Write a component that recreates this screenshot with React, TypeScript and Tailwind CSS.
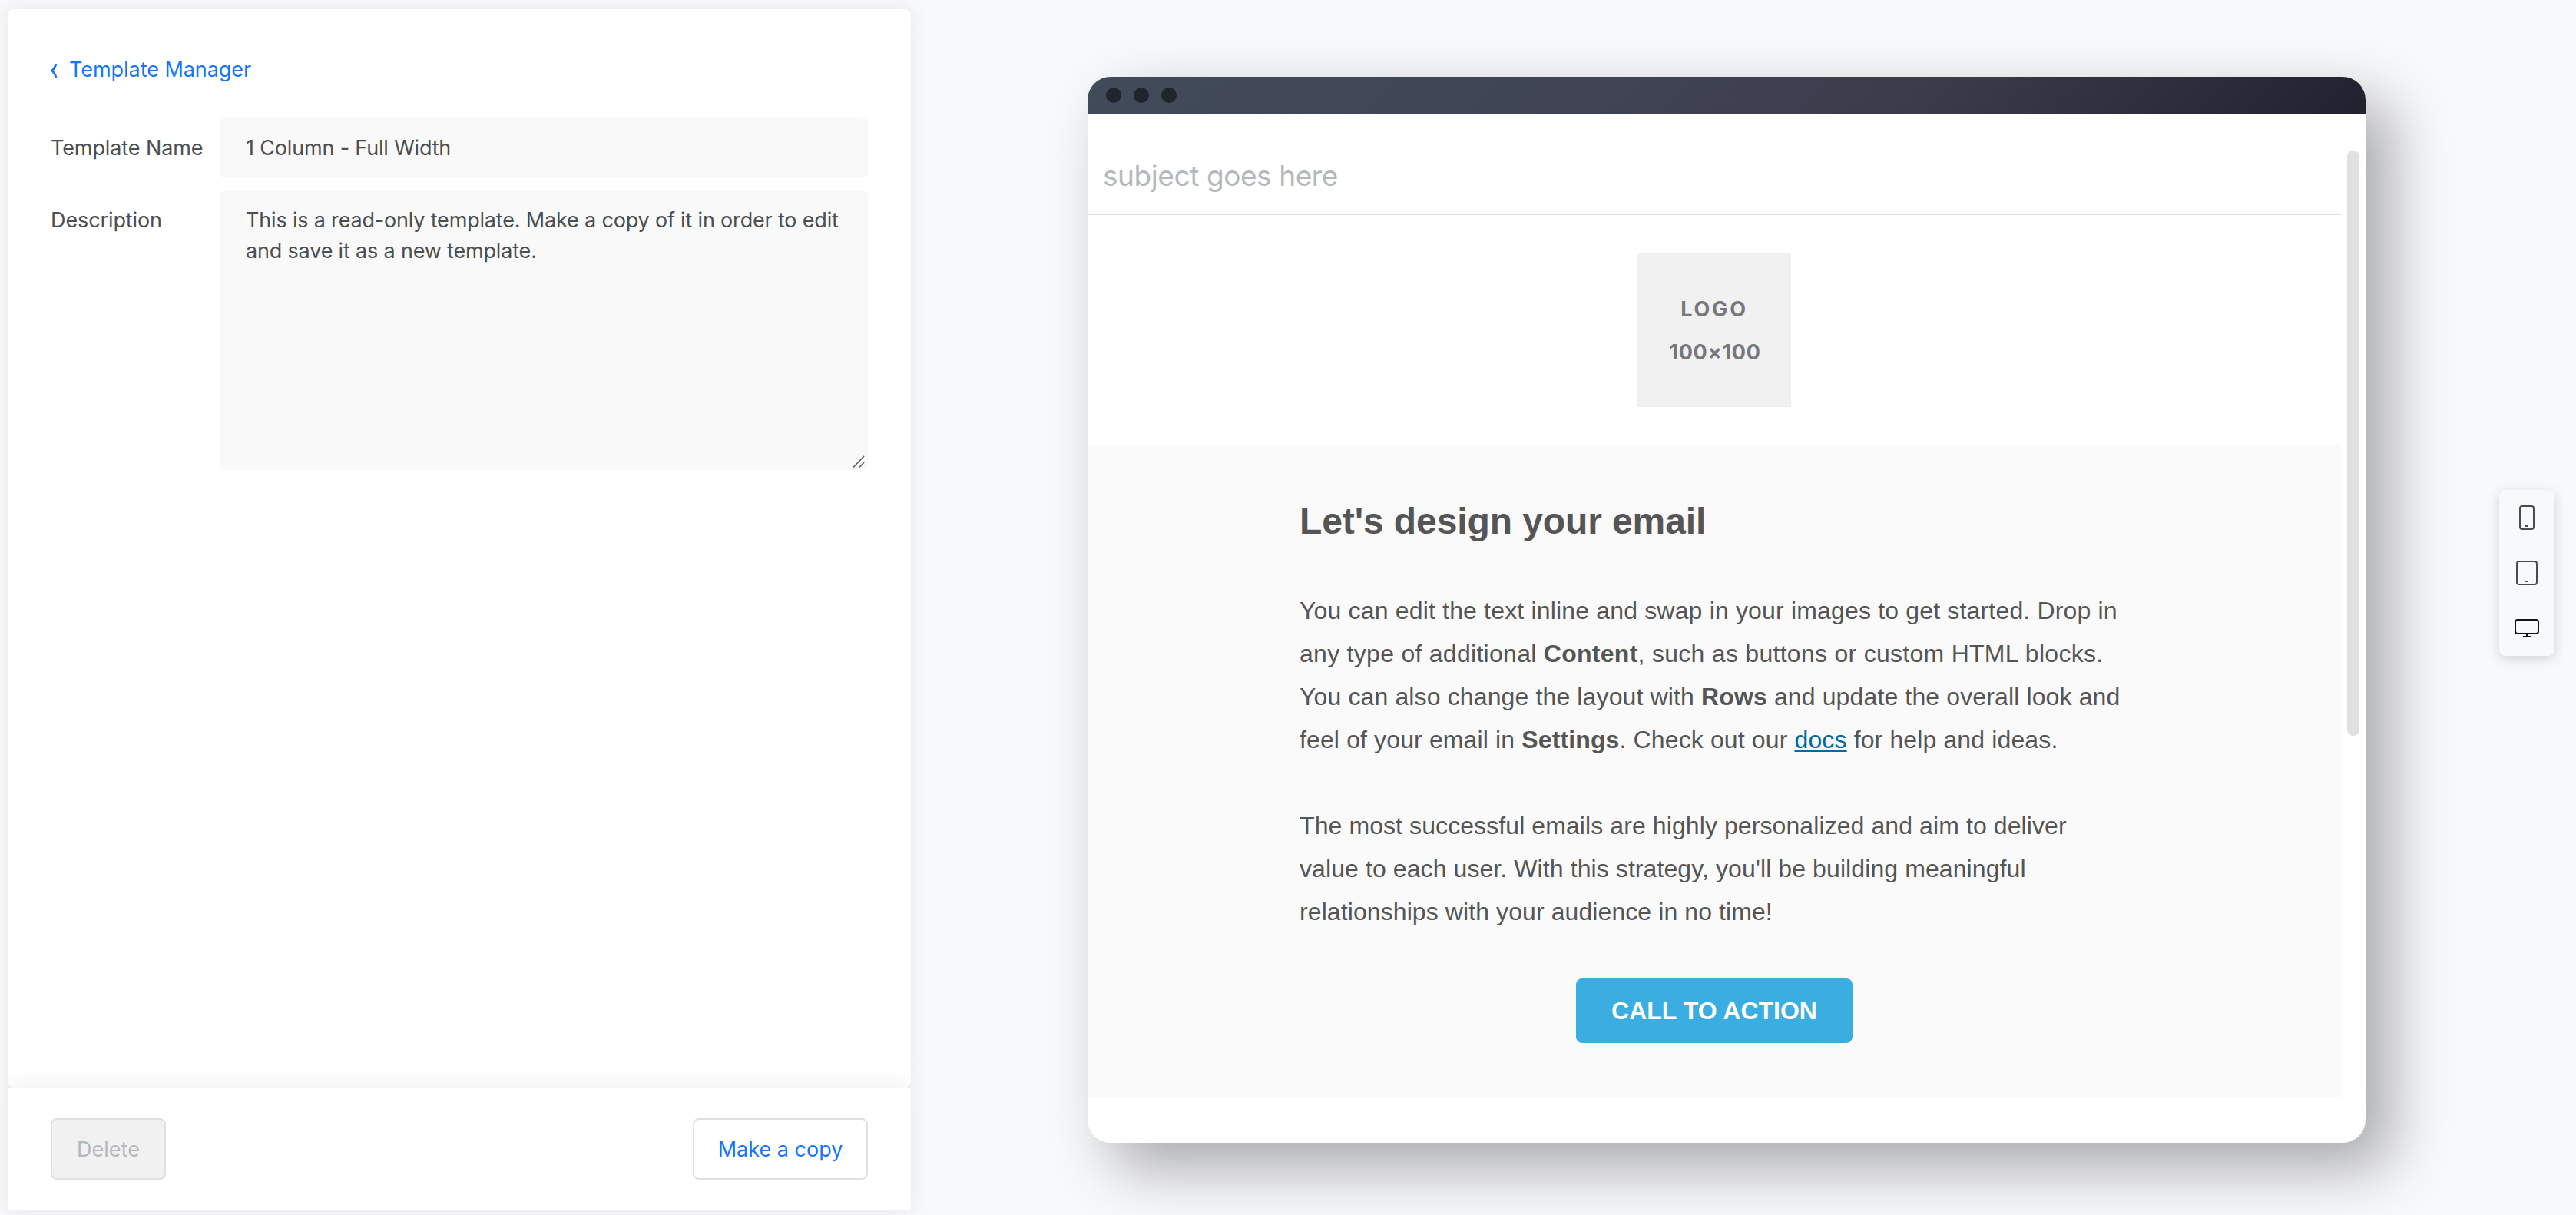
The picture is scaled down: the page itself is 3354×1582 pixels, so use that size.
import type { ReactNode } from 'react';
import clsx from 'clsx';

// --- Form ---
function Field({ label, labelClass, children }: { label: string; labelClass: string; children: ReactNode }) {
  return (
    <div className="flex">
      <label className={clsx('w-[220px] shrink-0 whitespace-nowrap leading-10 tracking-[-0.1px]', labelClass)}>{label}</label>
      {children}
    </div>
  );
}

function ResizeGrip() {
  return (
    <svg className="absolute right-1 bottom-[3px] h-4 w-4" viewBox="0 0 16 16" stroke="#5c5c5c" strokeWidth="1.6">
      <path d="M1 15.5 15 1M9 15.5 15 9" />
    </svg>
  );
}

function TemplatePanel() {
  return (
    <aside className="flex w-[1176px] shrink-0 flex-col font-['Inter','Liberation_Sans',sans-serif] text-[27px] text-[#4b4f4f]">
      <div className="flex-1 rounded-lg bg-white px-14 pt-[59px] shadow-[0_0_28px_rgba(0,0,0,0.08)]">
        <a className="flex h-10 items-center text-[#1476ff]">
          <svg className="mt-0.5 mr-[15px] h-[18px] w-[9px]" viewBox="0 0 9 18" fill="none" stroke="currentColor" strokeWidth="2.8">
            <path d="M7 0C6 4.500 4 7 1.800 9C4 11 6 13.500 7 18" />
          </svg>
          <span className="tracking-[-0.05px]">Template Manager</span>
        </a>
        <div className="mt-[41px] flex flex-col gap-4">
          <Field label="Template Name" labelClass="pt-[21px]">
            <div className="h-20 min-w-0 flex-1 rounded-lg bg-[#f9f9f9] px-[34px] pt-[21px] leading-10 tracking-[-0.17px]">
              1 Column - Full Width
            </div>
          </Field>
          <Field label="Description" labelClass="pt-[19px]">
            <div className="relative h-[364px] min-w-0 flex-1 rounded-lg bg-[#f9f9f9] px-[34px] pt-[19px] leading-10 tracking-[-0.18px] whitespace-nowrap">
              This is a read-only template. Make a copy of it in order to edit
              <br />
              and save it as a new template.
              <ResizeGrip />
            </div>
          </Field>
        </div>
      </div>
      <div className="relative flex h-40 items-center justify-between bg-white px-14 shadow-[0_0_28px_rgba(0,0,0,0.08)]">
        <button className="h-20 w-[150px] rounded-lg border-2 border-[#e0e0e0] bg-[#f1f1f1] pt-0.5 text-[#b2b9bb]">Delete</button>
        <button className="h-20 w-[228px] rounded-lg border-2 border-[#e0e0e0] bg-white pt-0.5 text-[#1476ff]">
          Make a copy
        </button>
      </div>
    </aside>
  );
}

// --- Email preview ---
function EmailBody() {
  return (
    <div className="h-[848px] bg-[#fafafa] pl-[276px] font-['Liberation_Sans',Arial,sans-serif] text-[32px] leading-[56px] text-[#555555]">
      <h1 className="pt-[70px] text-[48px] leading-[58px] font-bold tracking-[-0.1px] whitespace-nowrap">Let's design your email</h1>
      <p className="pt-[59px] tracking-[0.13px] whitespace-nowrap">
        <span className="tracking-[0.17px]">
          You can edit the text inline and swap in your images to get started. Drop in
        </span>
        <br />
        <span className="tracking-[0.28px]">
          any type of additional <strong>Content</strong>, such as buttons or custom HTML blocks.
        </span>
        <br />
        You can also change the layout with <strong>Rows</strong> and update the overall look and
        <br />
        feel of your email in <strong>Settings</strong>. Check out our{' '}
        <a className="text-[#0068a5] underline">docs</a> for help and ideas.
      </p>
      <p className="pt-14 tracking-[0.09px] whitespace-nowrap">
        The most successful emails are highly personalized and aim to deliver
        <br />
        value to each user. With this strategy, you'll be building meaningful
        <br />
        relationships with your audience in no time!
      </p>
      <button className="mt-[59px] ml-[360px] block h-[84px] w-[360px] rounded-lg bg-[#3aaee0] font-bold text-white">
        CALL TO ACTION
      </button>
    </div>
  );
}

function PreviewWindow() {
  return (
    <main className="mt-[88px] ml-[230px] h-[1388px] w-[1664px] shrink-0 overflow-hidden rounded-[30px] bg-white shadow-[32px_32px_80px_rgba(0,0,0,0.33)]">
      <div className="flex h-12 items-center gap-4 bg-linear-[135deg,#414b5a_0%,#404454_40%,#3c3b4c_65%,#22212f_100%] px-6">
        <i className="h-5 w-5 rounded-full bg-[#1f252d]" />
        <i className="h-5 w-5 rounded-full bg-[#1f252d]" />
        <i className="h-5 w-5 rounded-full bg-[#1f252d]" />
      </div>
      <div className="flex">
        <div className="w-[1632px]">
          <div className="h-[132px] border-b-2 border-[#e0e0e0] pt-[53px] pl-5 font-['Inter','Liberation_Sans',sans-serif] text-[37px] leading-[56px] tracking-[-0.42px] text-[#b2b9bb]">
            subject goes here
          </div>
          <div className="flex h-[300px] items-center justify-center">
            <div className="flex h-[200px] w-[200px] flex-col items-center justify-center bg-[#f1f1f1] pt-px font-['Inter','Liberation_Sans',sans-serif] text-[27px] leading-[56px] font-bold text-[#77787b]">
              <span className="tracking-[2.8px]">LOGO</span>
              <span className="pl-0.5 tracking-[0.7px]">100×100</span>
            </div>
          </div>
          <EmailBody />
        </div>
        <div className="mt-12 ml-2 h-[762px] w-4 rounded-full bg-[#e0e0e0]" />
      </div>
    </main>
  );
}

// --- Device switcher ---
function DeviceSwitcher() {
  return (
    <nav className="mt-[626px] ml-[174px] flex h-[216px] w-[72px] shrink-0 flex-col items-center rounded-lg bg-[#f8f9fb] shadow-[0_4px_16px_rgba(0,0,0,0.16)]">
      <svg className="mt-5 h-8 w-5" viewBox="0 0 20 32" fill="none" stroke="#4b4b4d" strokeWidth="2">
        <rect x="1" y="1" width="18" height="30" rx="3" />
        <path d="M8 27h4" />
      </svg>
      <svg className="mt-10 h-8 w-7" viewBox="0 0 28 32" fill="none" stroke="#4b4b4d" strokeWidth="2">
        <rect x="1" y="1" width="26" height="30" rx="3" />
        <path d="M12 27h4" />
      </svg>
      <svg className="mt-11 h-6 w-8" viewBox="0 0 32 24" fill="none" stroke="#121214" strokeWidth="2">
        <rect x="1" y="1" width="30" height="18" rx="3" />
        <path d="M16 19v4M11 23h10" />
      </svg>
    </nav>
  );
}

export default function App() {
  return (
    <div className="h-[1582px] w-[3354px] overflow-hidden bg-[#f8f9fb]">
      <div className="flex h-[1576px] items-stretch pt-3 pl-[10px]">
        <TemplatePanel />
        <PreviewWindow />
        <DeviceSwitcher />
      </div>
    </div>
  );
}
